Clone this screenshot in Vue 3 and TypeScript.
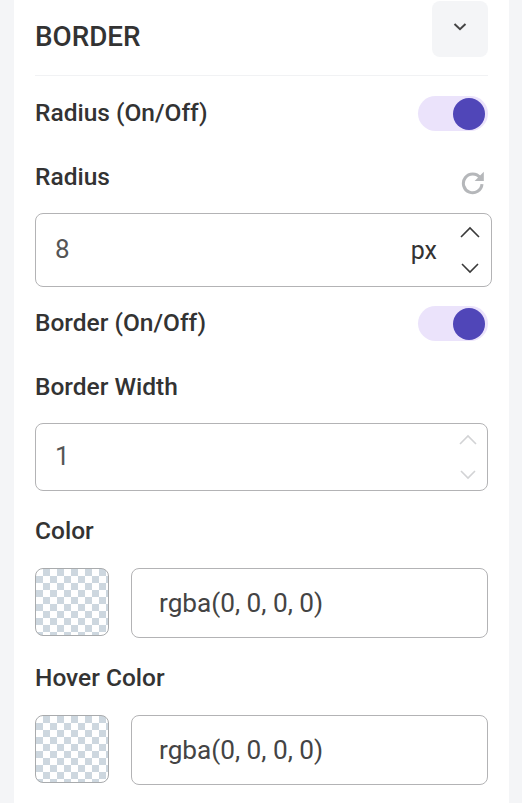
<template>
  <div class="page">
    <section class="panel">
      <header class="head">
        <h2 class="title">BORDER</h2>
        <button class="collapse" type="button" aria-label="Collapse">
          <svg width="16" height="16" viewBox="0 0 16 16" fill="none" stroke="#444" stroke-width="2">
            <path d="M2.5 5 8 10.2 13.500 5" />
          </svg>
        </button>
      </header>

      <div class="row row-first">
        <span class="label">Radius (On/Off)</span>
        <span class="toggle"><span class="knob"></span></span>
      </div>

      <div class="label-row">
        <span class="label">Radius</span>
        <svg class="reset" width="26" height="26" viewBox="0 0 24 24" fill="none">
          <path d="M18.600 8.100A8.600 8.600 0 1 0 20.300 14" stroke="#b5b7ba" stroke-width="2.800" />
          <path d="M22 2.500V11h-8.500z" fill="#b5b7ba" />
        </svg>
      </div>
      <div class="input input-radius">
        <span class="value">8</span>
        <span class="unit">px</span>
        <span class="spin">
          <svg width="20" height="12" viewBox="0 0 20 12" fill="none" stroke="#3a3a3a" stroke-width="1.600"><path d="M1 11 10 2l9 9" /></svg>
          <svg width="18" height="12" viewBox="0 0 18 12" fill="none" stroke="#3a3a3a" stroke-width="1.600"><path d="M1 2l8 8 8-8" /></svg>
        </span>
      </div>

      <div class="row row-border">
        <span class="label">Border (On/Off)</span>
        <span class="toggle"><span class="knob"></span></span>
      </div>

      <div class="label-row label-width">
        <span class="label">Border Width</span>
      </div>
      <div class="input input-width">
        <span class="value">1</span>
        <span class="spin spin-off">
          <svg width="18" height="11" viewBox="0 0 18 11" fill="none" stroke="#d2d3d5" stroke-width="1.600"><path d="M1 10l8-8 8 8" /></svg>
          <svg width="16" height="11" viewBox="0 0 16 11" fill="none" stroke="#d2d3d5" stroke-width="1.600"><path d="M1 2l7 7 7-7" /></svg>
        </span>
      </div>

      <div v-for="item in colors" :key="item.label" class="color-block">
        <div class="label color-label">{{ item.label }}</div>
        <div class="color-row">
          <span class="swatch"></span>
          <div class="color-input">{{ item.value }}</div>
        </div>
      </div>
    </section>
  </div>
</template>

<script setup lang="ts">
interface ColorItem {
  label: string;
  value: string;
}

const colors: ColorItem[] = [
  { label: 'Color', value: 'rgba(0, 0, 0, 0)' },
  { label: 'Hover Color', value: 'rgba(0, 0, 0, 0)' },
];
</script>

<style>
html,
body {
  margin: 0;
  background: #f4f5f7;
}
</style>

<style scoped>
.page {
  width: 522px;
  height: 803px;
  overflow: hidden;
  padding-left: 14px;
  box-sizing: border-box;
  font-family: Roboto, "Liberation Sans", sans-serif;
  color: #333;
}

.panel {
  width: 495px;
  height: 803px;
  box-sizing: border-box;
  background: #fff;
  padding: 1px 21px 0;
}

.head {
  display: flex;
  justify-content: space-between;
  height: 74px;
  border-bottom: 1px solid #f1f2f4;
  width: 453px;
}

.title {
  margin: 22px 0 0;
  font-size: 27.800px;
  line-height: 28px;
  font-weight: 500;
}

.collapse {
  width: 56px;
  height: 56px;
  padding: 0 0 4px;
  border: 0;
  border-radius: 8px;
  background: #f4f5f7;
  display: flex;
  align-items: center;
  justify-content: center;
}

.label {
  font-size: 24.500px;
  line-height: 26px;
  padding-bottom: 2px;
  font-weight: 500;
  color: #333;
}

.row {
  display: flex;
  justify-content: space-between;
  align-items: center;
  width: 453px;
  height: 35px;
}

.row-first {
  margin-top: 20px;
}

.row-border {
  margin-top: 19px;
}

.toggle {
  width: 70px;
  height: 35px;
  border-radius: 18px;
  background: #ebe3fb;
  display: flex;
  align-items: center;
  justify-content: flex-end;
  padding-right: 3px;
  box-sizing: border-box;
}

.knob {
  width: 32px;
  height: 32px;
  border-radius: 50%;
  background: #5046b8;
}

.label-row {
  display: flex;
  justify-content: space-between;
  width: 453px;
  height: 28px;
  margin-top: 33px;
}

.label-width {
  margin-top: 33px;
}

.reset {
  margin: 5px 2px 0 0;
}

.input {
  display: flex;
  align-items: center;
  box-sizing: border-box;
  border: 1px solid #b3b3b5;
  border-radius: 8px;
  padding-left: 19px;
  position: relative;
}

.input-radius {
  width: 457px;
  height: 74px;
  margin-top: 21px;
}

.input-width {
  width: 453px;
  height: 68px;
  margin-top: 21px;
}

.value {
  font-size: 26px;
  color: #555;
  flex: 1;
  margin-top: -2px;
}

.unit {
  font-size: 25px;
  color: #333;
  margin-right: 54px;
  margin-top: 0;
}

.spin {
  position: absolute;
  right: 11px;
  top: 12px;
  bottom: 12px;
  width: 20px;
  display: flex;
  flex-direction: column;
  justify-content: space-between;
  align-items: center;
}

.spin-off {
  top: 10px;
  bottom: 10px;
  right: 9px;
}

.color-block {
  width: 453px;
}

.color-label {
  margin-top: 27px;
}

.color-row {
  display: flex;
  align-items: flex-start;
  gap: 22px;
  margin-top: 22px;
}

.swatch {
  width: 74px;
  height: 68px;
  box-sizing: border-box;
  border: 1px solid #a9abad;
  border-radius: 8px;
  background-color: #fff;
  background-image: conic-gradient(#cdd7df 25%, #fff 0 50%, #cdd7df 0 75%, #fff 0);
  background-size: 14px 14px;
}

.color-input {
  flex: 1;
  height: 70px;
  box-sizing: border-box;
  border: 1px solid #b3b3b5;
  border-radius: 8px;
  padding-left: 27px;
  display: flex;
  align-items: center;
  font-size: 26.200px;
  color: #444;
}
</style>
